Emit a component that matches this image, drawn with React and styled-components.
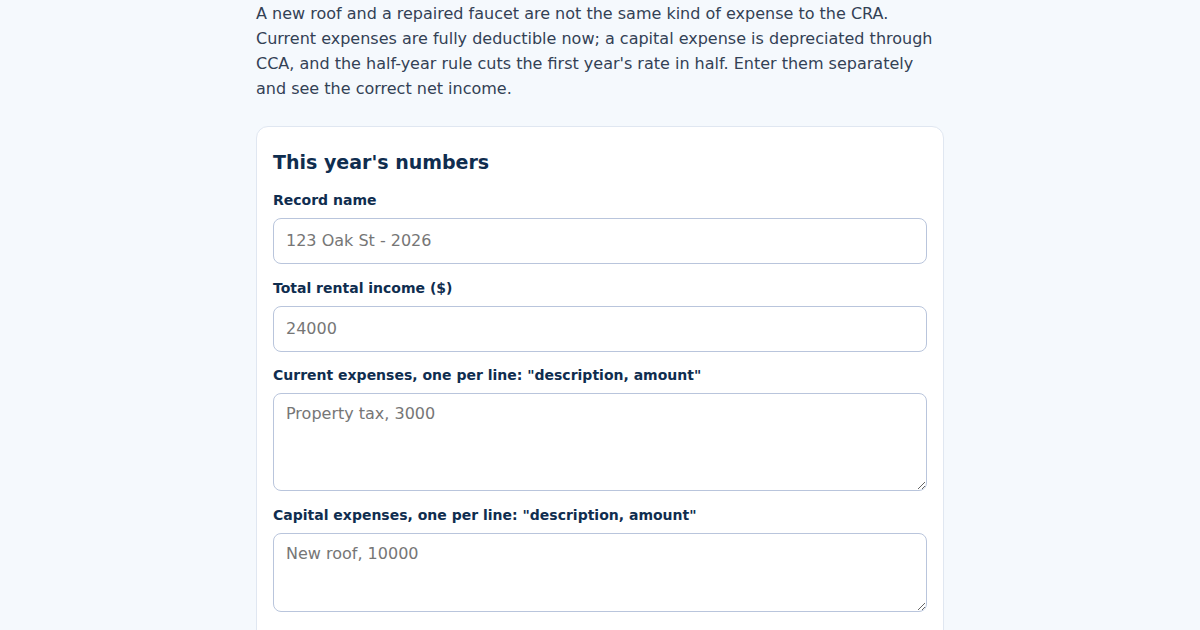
import React from "react";
import styled, { createGlobalStyle } from "styled-components";

const Global = createGlobalStyle`
  html, body { margin: 0; padding: 0; }
  body {
    background: #f5f9fd;
    font-family: "DejaVu Sans", "Noto Sans", sans-serif;
    color: #334155;
  }
  * { box-sizing: border-box; }
`;

const Page = styled.main`
  width: 688px;
  margin: 0 auto;
  padding: 1px 0 40px;
`;

const Intro = styled.p`
  margin: 0 0 25px;
  font-size: 16px;
  line-height: 25px;
  color: #334155;
`;

const Card = styled.section`
  background: #ffffff;
  border: 1px solid #e0e7f1;
  border-radius: 12px;
  padding: 21px 16px 24px;
  display: flex;
  flex-direction: column;
`;

const Title = styled.h2`
  margin: 0 0 14px;
  font-size: 19px;
  line-height: 28px;
  font-weight: 700;
  color: #0f2d4f;
`;

const Field = styled.div`
  display: flex;
  flex-direction: column;
  gap: 8px;
  margin-bottom: 13.5px;
`;

const Label = styled.label`
  font-size: 14px;
  line-height: 20px;
  font-weight: 700;
  color: #0f2d4f;
`;

const Input = styled.input`
  width: 100%;
  height: 46px;
  padding: 0 12px 1px;
  font: inherit;
  font-size: 16px;
  color: #1e293b;
  background: #fff;
  border: 1px solid #b9c5dc;
  border-radius: 8px;
  outline: none;
  &::placeholder { color: #767676; }
`;

const Area = styled.textarea`
  width: 100%;
  height: ${(p) => p.$h}px;
  padding: 10px 12px;
  font: inherit;
  font-size: 16px;
  line-height: 19px;
  color: #1e293b;
  background: #fff;
  border: 1px solid #b9c5dc;
  border-radius: 8px;
  outline: none;
  resize: vertical;
  &::placeholder { color: #767676; }
`;

export default function App() {
  return (
    <>
      <Global />
      <Page>
        <Intro>
          A new roof and a repaired faucet are not the same kind of expense to the CRA.
          Current expenses are fully deductible now; a capital expense is depreciated through
          CCA, and the half-year rule cuts the first year's rate in half. Enter them separately
          and see the correct net income.
        </Intro>
        <Card>
          <Title>This year's numbers</Title>
          <Field>
            <Label htmlFor="name">Record name</Label>
            <Input id="name" placeholder="123 Oak St - 2026" />
          </Field>
          <Field>
            <Label htmlFor="income">Total rental income ($)</Label>
            <Input id="income" placeholder="24000" />
          </Field>
          <Field>
            <Label htmlFor="current">Current expenses, one per line: "description, amount"</Label>
            <Area id="current" $h={98} placeholder="Property tax, 3000" />
          </Field>
          <Field>
            <Label htmlFor="capital">Capital expenses, one per line: "description, amount"</Label>
            <Area id="capital" $h={79} placeholder="New roof, 10000" />
          </Field>
        </Card>
      </Page>
    </>
  );
}
